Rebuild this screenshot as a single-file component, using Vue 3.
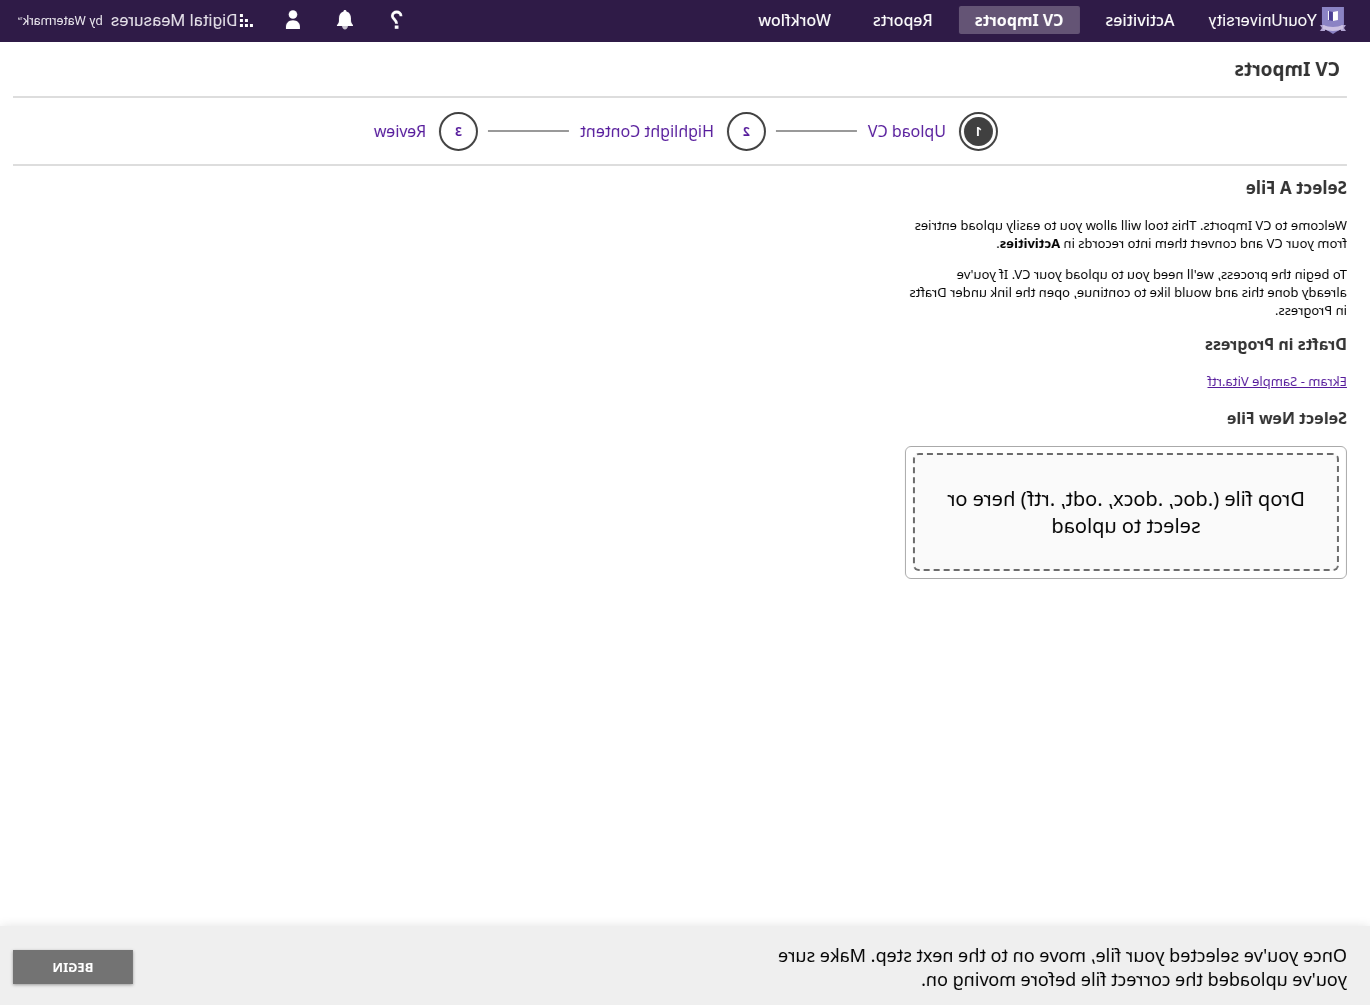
<script setup>
import { ref } from 'vue'

const navItems = [
  { label: 'Activities', active: false },
  { label: 'CV Imports', active: true },
  { label: 'Reports', active: false },
  { label: 'Workflow', active: false },
]

const steps = [
  { number: 1, label: 'Upload CV' },
  { number: 2, label: 'Highlight Content' },
  { number: 3, label: 'Review' },
]

const currentStep = ref(1)
</script>

<template>
  <div class="page">
    <header class="topbar">
      <a class="brand" href="#">
        <svg width="26" height="28" viewBox="0 0 26 28" aria-hidden="true">
          <path d="M2 1h22v17c0 5-6 6-11 10C8 24 2 23 2 18z" fill="#8b83c4" />
          <path d="M0 19h5v6H0l2-3zM26 19h-5v6h5l-2-3z" fill="#b3a5d3" />
          <path d="M3 19q10 4 20 0v4q-10 4-20 0z" fill="#cbc0e2" />
          <path d="M8 5l5 1v9l-5-1z" fill="#fff" />
          <path d="M13 6l5-1v9l-5 1z" fill="#4b3f94" />
          <path d="M17 5h1v9h-1z" fill="#fff" />
        </svg>
        <span>YourUniversity</span>
      </a>
      <nav class="nav" aria-label="Main">
        <a v-for="item in navItems" :key="item.label" href="#" :class="{ active: item.active }">{{ item.label }}</a>
      </nav>
      <div class="tools">
        <button type="button" aria-label="Help">
          <svg width="20" height="20" viewBox="0 0 20 20">
            <path d="M6 6.200C6 3.400 8 2 10.300 2s4.300 1.600 4.300 3.900c0 3.200-4.200 3.800-4.200 7.900" fill="none" stroke="#fff" stroke-width="2.800" />
            <rect x="8.500" y="15.500" width="3.700" height="3.300" fill="#fff" />
          </svg>
        </button>
        <button type="button" aria-label="Notifications">
          <svg width="20" height="20" viewBox="0 0 20 20">
            <path d="M10 0c1 0 1.500.7 1.500 1.500C14.500 2.300 16 5 16 8.500c0 3.500 0 4 2 6.500v1H2v-1c2-2.500 2-3 2-6.500C4 5 5.500 2.300 8.500 1.500 8.500.7 9 0 10 0z" fill="#fff" />
            <path d="M7 16h6c-.4 2.200-1.400 3.500-3 3.500S7.400 18.200 7 16z" fill="#c9c4d0" />
          </svg>
        </button>
        <button type="button" aria-label="Account">
          <svg width="20" height="20" viewBox="0 0 20 20">
            <circle cx="10" cy="4.500" r="4.300" fill="#fff" />
            <path d="M3 19v-2c0-4 2.500-6.800 7-6.800s7 2.800 7 6.800v2z" fill="#fff" />
          </svg>
        </button>
      </div>
      <div class="product">
        <svg width="13" height="13" viewBox="0 0 13 13" aria-hidden="true" fill="#fff">
          <rect x="0" y="10" width="3" height="3" />
          <rect x="5" y="10" width="3" height="3" />
          <rect x="5" y="5" width="3" height="3" />
          <rect x="10" y="10" width="3" height="3" />
          <rect x="10" y="5" width="3" height="3" />
          <rect x="10" y="0" width="3" height="3" />
        </svg>
        <span class="product-name">Digital Measures</span>
        <span class="product-by">by Watermark<small>™</small></span>
      </div>
    </header>

    <main class="content">
      <h1>CV Imports</h1>

      <ol class="steps">
        <li v-for="step in steps" :key="step.number">
          <a href="#" :class="{ current: step.number === currentStep }">
            <span class="bullet"><span>{{ step.number }}</span></span>
            <span class="step-label">{{ step.label }}</span>
          </a>
        </li>
      </ol>

      <section class="panel">
        <h2 class="lead">Select A File</h2>
        <p>
          Welcome to CV Imports. This tool will allow you to easily upload entries
          from your CV and convert them into records in <strong>Activities</strong>.
        </p>
        <p>
          To begin the process, we'll need you to upload your CV. If you've<br>
          already done this and would like to continue, open the link under Drafts
          in Progress.
        </p>
        <h2>Drafts in Progress</h2>
        <p class="draft"><a href="#">Ekram - Sample Vita.rtf</a></p>
        <h2>Select New File</h2>
        <div class="dropzone">
          <button type="button">Drop file (.doc, .docx, .odt, .rtf) here or select to upload</button>
        </div>
      </section>
    </main>

    <footer class="footer">
      <p>Once you've selected your file, move on to the next step. Make sure you've uploaded the correct file before moving on.</p>
      <button type="button">BEGIN</button>
    </footer>
  </div>
</template>

<style>
body {
  margin: 0;
  background: #fff;
}
</style>

<style scoped>
.page {
  display: flex;
  flex-direction: column;
  min-height: 100vh;
  color: #000;
  font-family: "Noto Sans", sans-serif;
  font-size: 13px;
  line-height: 18px;
  transform: scaleX(-1);
}

button {
  font-family: inherit;
  border: 0;
  cursor: pointer;
}

.topbar {
  display: flex;
  align-items: center;
  height: 42px;
  padding: 0 17px 2px 24px;
  box-sizing: border-box;
  background: #2f1b47;
  color: #fff;
}

.brand {
  display: flex;
  align-items: center;
  gap: 3px;
  color: #fff;
  font-family: Roboto, sans-serif;
  font-size: 17px;
  text-decoration: none;
}

.nav {
  display: flex;
  gap: 10px;
  margin-left: 18px;
}

.nav a {
  padding: 5px 16px;
  border-radius: 2px;
  color: #fff;
  font-size: 16px;
  font-weight: 500;
  line-height: 18px;
  text-decoration: none;
}

.nav a.active {
  background: #645475;
  font-weight: 700;
}

.tools {
  display: flex;
  gap: 32px;
  margin-left: auto;
}

.tools button {
  display: flex;
  padding: 0;
  background: none;
}

.product {
  display: flex;
  align-items: center;
  margin-left: 30px;
  color: #e6e2ea;
  font-family: Roboto, sans-serif;
}

.product-name {
  margin-left: 3px;
  font-size: 17px;
}

.product-by {
  margin-left: 8px;
  padding-top: 2px;
  font-size: 13px;
}

.product-by small {
  font-size: 9px;
  vertical-align: top;
}

.content {
  flex: 1;
  padding: 0 13px 0 23px;
}

h1 {
  margin: 0;
  padding: 14px 7px;
  color: #333;
  font-size: 19px;
  font-weight: 700;
  line-height: 26px;
  border-bottom: 2px solid #ddd;
}

.steps {
  display: flex;
  justify-content: center;
  margin: 0;
  padding: 14px 12px 13px 0;
  list-style: none;
  border-bottom: 2px solid #ddd;
}

.steps li {
  display: flex;
  align-items: center;
}

.steps li:not(:last-child)::after {
  content: "";
  width: 81px;
  height: 2px;
  margin: 0 10px 2px 11px;
  background: #999;
}

.steps a {
  display: flex;
  align-items: center;
  gap: 13px;
  color: #551a9b;
  font-size: 16px;
  text-decoration: none;
}

.step-label {
  padding-bottom: 2px;
}

.bullet {
  display: flex;
  width: 39px;
  height: 39px;
  padding: 3px;
  box-sizing: border-box;
  border: 2px solid #404040;
  border-radius: 50%;
  font-size: 12px;
  font-weight: 700;
}

.bullet span {
  flex: 1;
  border-radius: 50%;
  line-height: 29px;
  text-align: center;
}

.current .bullet span {
  background: #404040;
  color: #fff;
}

.panel {
  width: 442px;
  max-width: 100%;
}

h2 {
  margin: 0;
  padding: 1px 0 17px;
  color: #333;
  font-size: 16px;
  font-weight: 700;
  line-height: 22px;
}

h2.lead {
  padding-top: 11px;
  font-size: 17px;
}

.panel p {
  margin: 0 0 13px;
}

.panel p.draft {
  margin-bottom: 16px;
}

.panel p a {
  color: #551a9b;
}

.dropzone {
  padding: 6px 7px 7px;
  border: 1px solid #aaa;
  border-radius: 6px;
}

.dropzone button {
  display: block;
  width: 100%;
  padding: 30px 24px;
  border: 2px dashed #6b6b6b;
  border-radius: 6px;
  background: #fafafa;
  color: #000;
  font-size: 20px;
  line-height: 27px;
}

.footer {
  display: flex;
  align-items: center;
  justify-content: space-between;
  padding: 17px 13px 14px 23px;
  background: #efefef;
  box-shadow: 0 0 10px #e4e4e4;
}

.footer p {
  width: 600px;
  margin: 0;
  font-size: 18px;
  line-height: 24px;
}

.footer button {
  width: 120px;
  height: 34px;
  background: #737373;
  box-shadow: 0 1px 3px #999;
  color: #fff;
  font-size: 13px;
  font-weight: 700;
}
</style>
